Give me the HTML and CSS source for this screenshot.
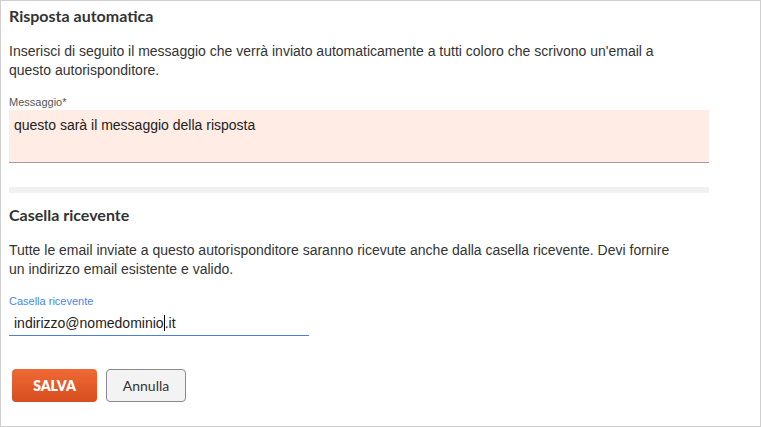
FILE: index.html
```html
<!DOCTYPE html>
<html>
<head>
  <meta charset="utf-8">
  <title>Risposta automatica</title>
  <link rel="stylesheet" href="styles.css">
</head>
<body>
<div class="panel">

  <h2 class="title">Risposta automatica</h2>
  <p class="desc">Inserisci di seguito il messaggio che verrà inviato automaticamente a tutti coloro che scrivono un'email a questo autorisponditore.</p>

  <div class="field">
    <label class="label">Messaggio*</label>
    <div class="textarea">questo sarà il messaggio della risposta</div>
  </div>

  <div class="separator"></div>

  <h2 class="title">Casella ricevente</h2>
  <p class="desc">Tutte le email inviate a questo autorisponditore saranno ricevute anche dalla casella ricevente. Devi fornire un indirizzo email esistente e valido.</p>

  <div class="field">
    <label class="label label-focus">Casella ricevente</label>
    <div class="input">indirizzo@nomedominio<span class="caret"></span>.it</div>
  </div>

  <div class="actions">
    <button class="btn btn-save">SALVA</button>
    <button class="btn btn-cancel">Annulla</button>
  </div>

</div>
</body>
</html>
```

FILE: styles.css
```css
html, body {
  margin: 0;
  background: #fff;
}

.panel {
  box-sizing: border-box;
  width: 761px;
  height: 427px;
  border: 1px solid #cfcfcf;
  padding: 0 8px;
  font-family: "Liberation Sans", Arial, sans-serif;
  color: #333;
}

.title {
  font-family: Lato, sans-serif;
  font-weight: 700;
  font-size: 16px;
  line-height: 20px;
  margin: 5px 0 0 0;
  color: #333;
}

.desc {
  font-size: 14px;
  line-height: 19px;
  margin: 16px 0 0 0;
  width: 670px;
}

.field {
  margin-top: 16px;
  width: 700px;
}

.label {
  display: block;
  font-size: 11px;
  line-height: 12px;
  color: #555;
}

.label-focus {
  color: #4a86e8;
}

.textarea {
  box-sizing: border-box;
  height: 53px;
  margin-top: 2px;
  padding: 6px 5px;
  background: #feece5;
  border-bottom: 1px solid #9e9e9e;
  font-size: 14px;
  line-height: 18px;
  color: #222;
}

.separator {
  width: 700px;
  height: 6px;
  margin: 24px 0 12px;
  background: #f1f1f1;
}

.input {
  box-sizing: border-box;
  width: 300px;
  height: 27px;
  margin-top: 2px;
  padding: 5px 5px 0;
  border-bottom: 1px solid #4a7fd6;
  font-size: 14px;
  line-height: 18px;
  color: #222;
}

.caret {
  display: inline-block;
  width: 1px;
  height: 16px;
  background: #000;
  vertical-align: -3px;
}

.actions {
  display: flex;
  gap: 9px;
  margin-top: 33px;
  padding-left: 3px;
}

.btn {
  height: 33px;
  border-radius: 4px;
  font-family: Lato, sans-serif;
  font-size: 14px;
  cursor: pointer;
}

.btn-save {
  width: 85px;
  border: none;
  background: linear-gradient(#ee6936, #d84e1e);
  color: #fff;
  font-weight: 800;
  font-size: 14px;
}

.btn-cancel {
  width: 80px;
  border: 1px solid #8a8a8a;
  background: #f3f3f3;
  color: #333;
}
```
